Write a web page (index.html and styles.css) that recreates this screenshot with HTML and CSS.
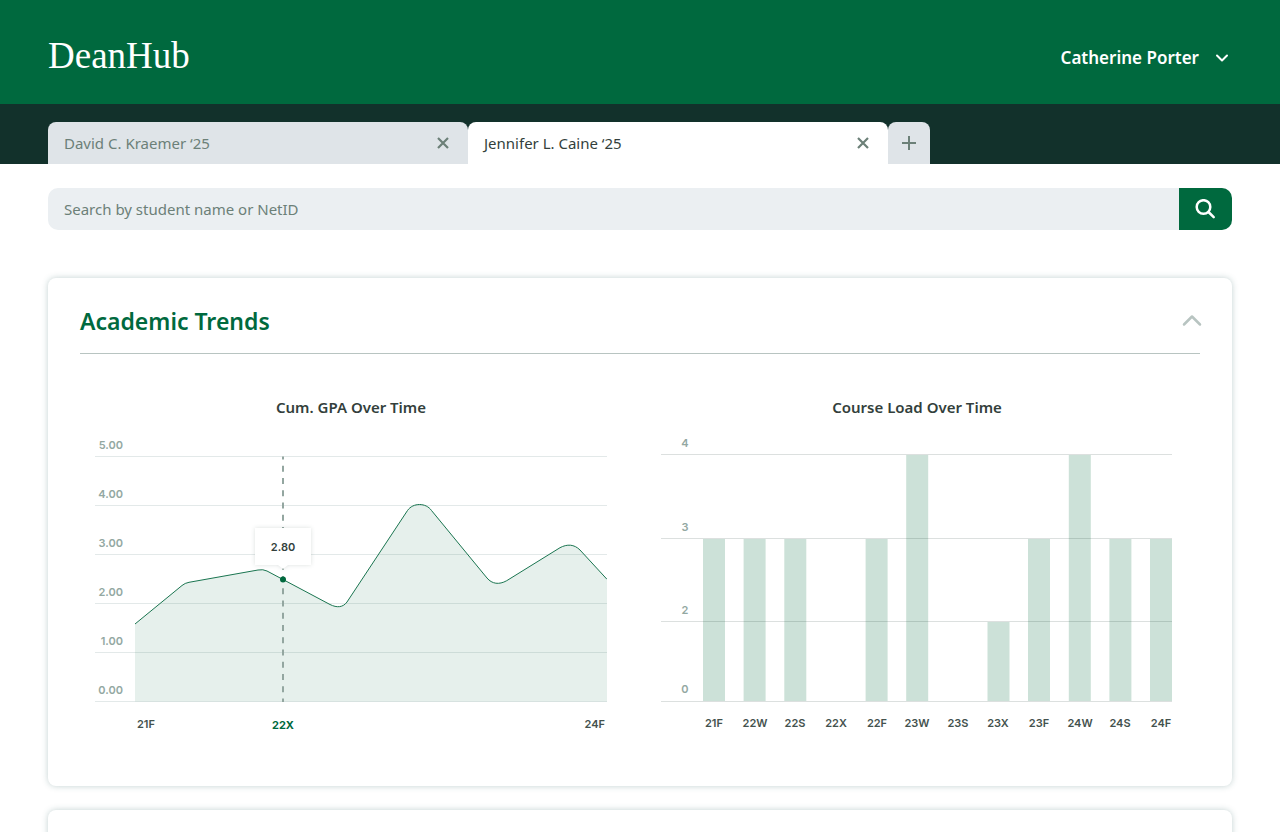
FILE: index.html
```html
<!DOCTYPE html>
<html lang="en">
<head>
    <meta charset="UTF-8">
    <meta name="viewport" content="width=device-width, initial-scale=1.0">
    <title>DeanHub</title>
    <link rel="stylesheet" href="styles.css">
</head>
<body>

    <header class="header">
        <a class="logo" href="#">DeanHub</a>
        <button class="user-menu" type="button">
            Catherine Porter
            <svg width="14" height="10" viewBox="0 0 14 10" aria-hidden="true"><path d="M2 2.5l5 5 5-5"/></svg>
        </button>
    </header>

    <nav class="tabs" aria-label="Open students">
        <div class="tab">
            <a href="#">David C. Kraemer ‘25</a>
            <button type="button" aria-label="Close David C. Kraemer">
                <svg width="14" height="14" viewBox="0 0 14 14"><path d="M2 2l10 10M12 2L2 12"/></svg>
            </button>
        </div>
        <div class="tab active">
            <a href="#">Jennifer L. Caine ‘25</a>
            <button type="button" aria-label="Close Jennifer L. Caine">
                <svg width="14" height="14" viewBox="0 0 14 14"><path d="M2 2l10 10M12 2L2 12"/></svg>
            </button>
        </div>
        <button class="tab-add" type="button" aria-label="New tab">
            <svg width="16" height="16" viewBox="0 0 16 16"><path d="M8 1v14M1 8h14"/></svg>
        </button>
    </nav>

    <main>
        <form class="search">
            <input type="search" placeholder="Search by student name or NetID" aria-label="Search by student name or NetID">
            <button type="button" aria-label="Search">
                <svg width="22" height="20" viewBox="0 0 22 20"><circle cx="8.5" cy="8" r="6.8"/><path d="M13.5 13l5.200 5.200"/></svg>
            </button>
        </form>

        <section class="card">
            <div class="card-head">
                <h2>Academic Trends</h2>
                <button type="button" aria-label="Collapse">
                    <svg width="20" height="14" viewBox="0 0 20 14"><path d="M2 10.500l8-8 8 8"/></svg>
                </button>
            </div>

            <div class="charts">
                <div class="chart">
                    <h3>Cum. GPA Over Time</h3>
                    <svg viewBox="0 0 512 310" role="img" aria-label="Cumulative GPA over time">
                        <!-- area -->
                        <path class="area" d="M40 194L87 155.500Q90 153 94 152.300L163 140Q168 139 172 141L188 149.500L235 174.500C242 178 248 177.500 252 172L312.500 80.500C318 72.500 331 72.500 336.500 80.500L392 148C397 154 404 155 411.700 150.700L465 117.700C472 114 479 114 485 120L512 149.300V271.500H40Z"/>
                        <path class="grid" d="M0 26.500H512M0 75.500H512M0 124.500H512M0 173.500H512M0 222.500H512M0 271.500H512"/>
                        <path class="line" d="M40 194L87 155.500Q90 153 94 152.300L163 140Q168 139 172 141L188 149.500L235 174.500C242 178 248 177.500 252 172L312.500 80.500C318 72.500 331 72.500 336.500 80.500L392 148C397 154 404 155 411.700 150.700L465 117.700C472 114 479 114 485 120L512 149.300"/>
                        <g class="y-labels" text-anchor="end">
                            <text x="28" y="19">5.00</text>
                            <text x="28" y="68">4.00</text>
                            <text x="28" y="117">3.00</text>
                            <text x="28" y="166">2.00</text>
                            <text x="28" y="215">1.00</text>
                            <text x="28" y="264">0.00</text>
                        </g>
                        <!-- selected term -->
                        <path class="marker" d="M188 26.500V272"/>
                        <circle class="dot" cx="188" cy="149.500" r="3"/>
                        <path class="tip" d="M160 98h56v37h-23l-5 4-5-4h-23z"/>
                        <text class="tip-text" x="188" y="121" text-anchor="middle">2.80</text>
                        <g class="x-labels">
                            <text x="42" y="298">21F</text>
                            <text class="selected" x="188" y="299" text-anchor="middle">22X</text>
                            <text x="510" y="298" text-anchor="end">24F</text>
                        </g>
                    </svg>
                </div>

                <div class="chart">
                    <h3>Course Load Over Time</h3>
                    <svg viewBox="0 0 512 310" role="img" aria-label="Course load over time">
                        <g class="bars">
                            <rect x="42" y="109" width="22" height="162"/>
                            <rect x="82.600" y="109" width="22" height="162"/>
                            <rect x="123.300" y="109" width="22" height="162"/>
                            <rect x="204.600" y="109" width="22" height="162"/>
                            <rect x="245.200" y="25" width="22" height="246"/>
                            <rect x="326.500" y="192" width="22" height="79"/>
                            <rect x="367" y="109" width="22" height="162"/>
                            <rect x="407.800" y="25" width="22" height="246"/>
                            <rect x="448.400" y="109" width="22" height="162"/>
                            <rect x="489" y="109" width="22" height="162"/>
                        </g>
                        <path class="grid dark" d="M0 24.500H511M0 108.500H511M0 191.500H511M0 271.500H511"/>
                        <g class="y-labels" text-anchor="middle">
                            <text x="24" y="17">4</text>
                            <text x="24" y="101">3</text>
                            <text x="24" y="184">2</text>
                            <text x="24" y="263">0</text>
                        </g>
                        <g class="x-labels" text-anchor="middle">
                            <text x="53" y="297">21F</text>
                            <text x="94" y="297">22W</text>
                            <text x="134" y="297">22S</text>
                            <text x="175" y="297">22X</text>
                            <text x="216" y="297">22F</text>
                            <text x="256" y="297">23W</text>
                            <text x="297" y="297">23S</text>
                            <text x="337" y="297">23X</text>
                            <text x="378" y="297">23F</text>
                            <text x="419" y="297">24W</text>
                            <text x="459" y="297">24S</text>
                            <text x="500" y="297">24F</text>
                        </g>
                    </svg>
                </div>
            </div>
        </section>

        <section class="card next"></section>
    </main>

</body>
</html>
```
FILE: styles.css
```css
* {
    margin: 0; padding: 0;
    box-sizing: border-box;
}
body {
    background: #fff;
    color: #333f3c;
    font-family: "Noto Sans", sans-serif;
    font-size: 15px;
}
a { color: inherit; text-decoration: none; }
button {
    border: none;
    background: none;
    font: inherit;
    color: inherit;
    cursor: pointer;
}
svg {
    display: block;
    fill: none;
    stroke: currentColor;
    stroke-width: 2;
}

.header {
    height: 104px;
    padding: 12px 48px 0;
    background: #00693e;
    color: white;
    display: flex;
    align-items: center;
    justify-content: space-between;
}
.logo {
    font-family: "Liberation Serif", serif;
    font-size: 37px;
    line-height: 42px;
    padding-bottom: 4px;
}
.user-menu {
    display: flex;
    align-items: center;
    gap: 16px;
    padding-right: 3px;
    font-size: 17px;
    font-weight: 600;
    line-height: 24px;
}
.user-menu svg { stroke-linecap: round; stroke-linejoin: round; }

.tabs {
    display: flex;
    height: 60px;
    padding: 18px 48px 0;
    background: #12312b;
}
.tab {
    flex: 0 1 420px;
    display: flex;
    align-items: center;
    justify-content: space-between;
    padding: 0 18px 0 16px;
    border-radius: 8px 8px 0 0;
    background: #dfe4e8;
    color: #6c8078;
}
.tab.active { background: white; }
.tab.active a { color: #333f3c; }
.tab svg { stroke-width: 2.2; }
.tab-add {
    display: flex;
    align-items: center;
    justify-content: center;
    width: 42px;
    border-radius: 8px 8px 0 0;
    background: #dfe4e8;
    color: #6c8078;
}

main { padding: 24px 48px; }
.search {
    display: flex;
    height: 42px;
    margin-bottom: 48px;
    border-radius: 10px;
    overflow: hidden;
}
.search input {
    flex: 1;
    min-width: 0;
    padding: 0 16px;
    border: none;
    background: #ebeff2;
    font: inherit;
}
.search input::placeholder { color: #6c8078; opacity: 1; }
.search button {
    display: flex;
    align-items: center;
    justify-content: center;
    width: 53px;
    background: #00693e;
    color: white;
}
.search svg { stroke-width: 2.5; stroke-linecap: round; }

.card {
    margin-bottom: 24px;
    padding: 0 32px 46px;
    border-radius: 8px;
    background: white;
    box-shadow: 0 0 6px rgba(40,90,90,0.28);
}
.next { height: 120px; }
.card-head {
    display: flex;
    align-items: center;
    justify-content: space-between;
    padding: 27px 0 16px;
    border-bottom: 1px solid #b8c4c1;
    margin-bottom: 41px;
}
.card-head h2 {
    color: #00693e;
    font-size: 23px;
    font-weight: 600;
    line-height: 32px;
}
.card-head button { color: #b8c4c1; margin-right: -2px; }
.card-head svg { stroke-width: 2.5; stroke-linecap: round; stroke-linejoin: round; }

.charts {
    display: grid;
    grid-template-columns: 1fr 1fr;
    gap: 54px;
    padding: 0 27px 0 15px;
}
.chart h3 {
    margin-bottom: 11px;
    text-align: center;
    font-size: 15px;
    font-weight: 600;
    line-height: 24px;
}
.chart svg { width: 100%; stroke: none; }
.chart text {
    font-family: Inter, sans-serif;
    font-size: 11px;
    font-weight: 600;
}
.chart .y-labels text { fill: #93a8a2; }
.chart .x-labels text { fill: #44524e; }
.chart .x-labels .selected { fill: #00693e; font-weight: 700; }
.chart .grid { stroke: rgba(60,100,100,0.14); stroke-width: 1; }
.chart .grid.dark { stroke: rgba(18,49,43,0.15); }
.area { fill: #e6f0ec; }
.line { stroke: #1a7550; stroke-width: 1; }
.marker {
    stroke: #93a6a0;
    stroke-width: 2;
    stroke-dasharray: 6 6.25;
    stroke-dashoffset: 3;
}
.dot { fill: #00693e; }
.tip { fill: white; filter: drop-shadow(0 0 2px rgba(18,49,43,0.15)); }
.chart .tip-text { fill: #333f3c; }
.bars { fill: #cce1d8; }
```
